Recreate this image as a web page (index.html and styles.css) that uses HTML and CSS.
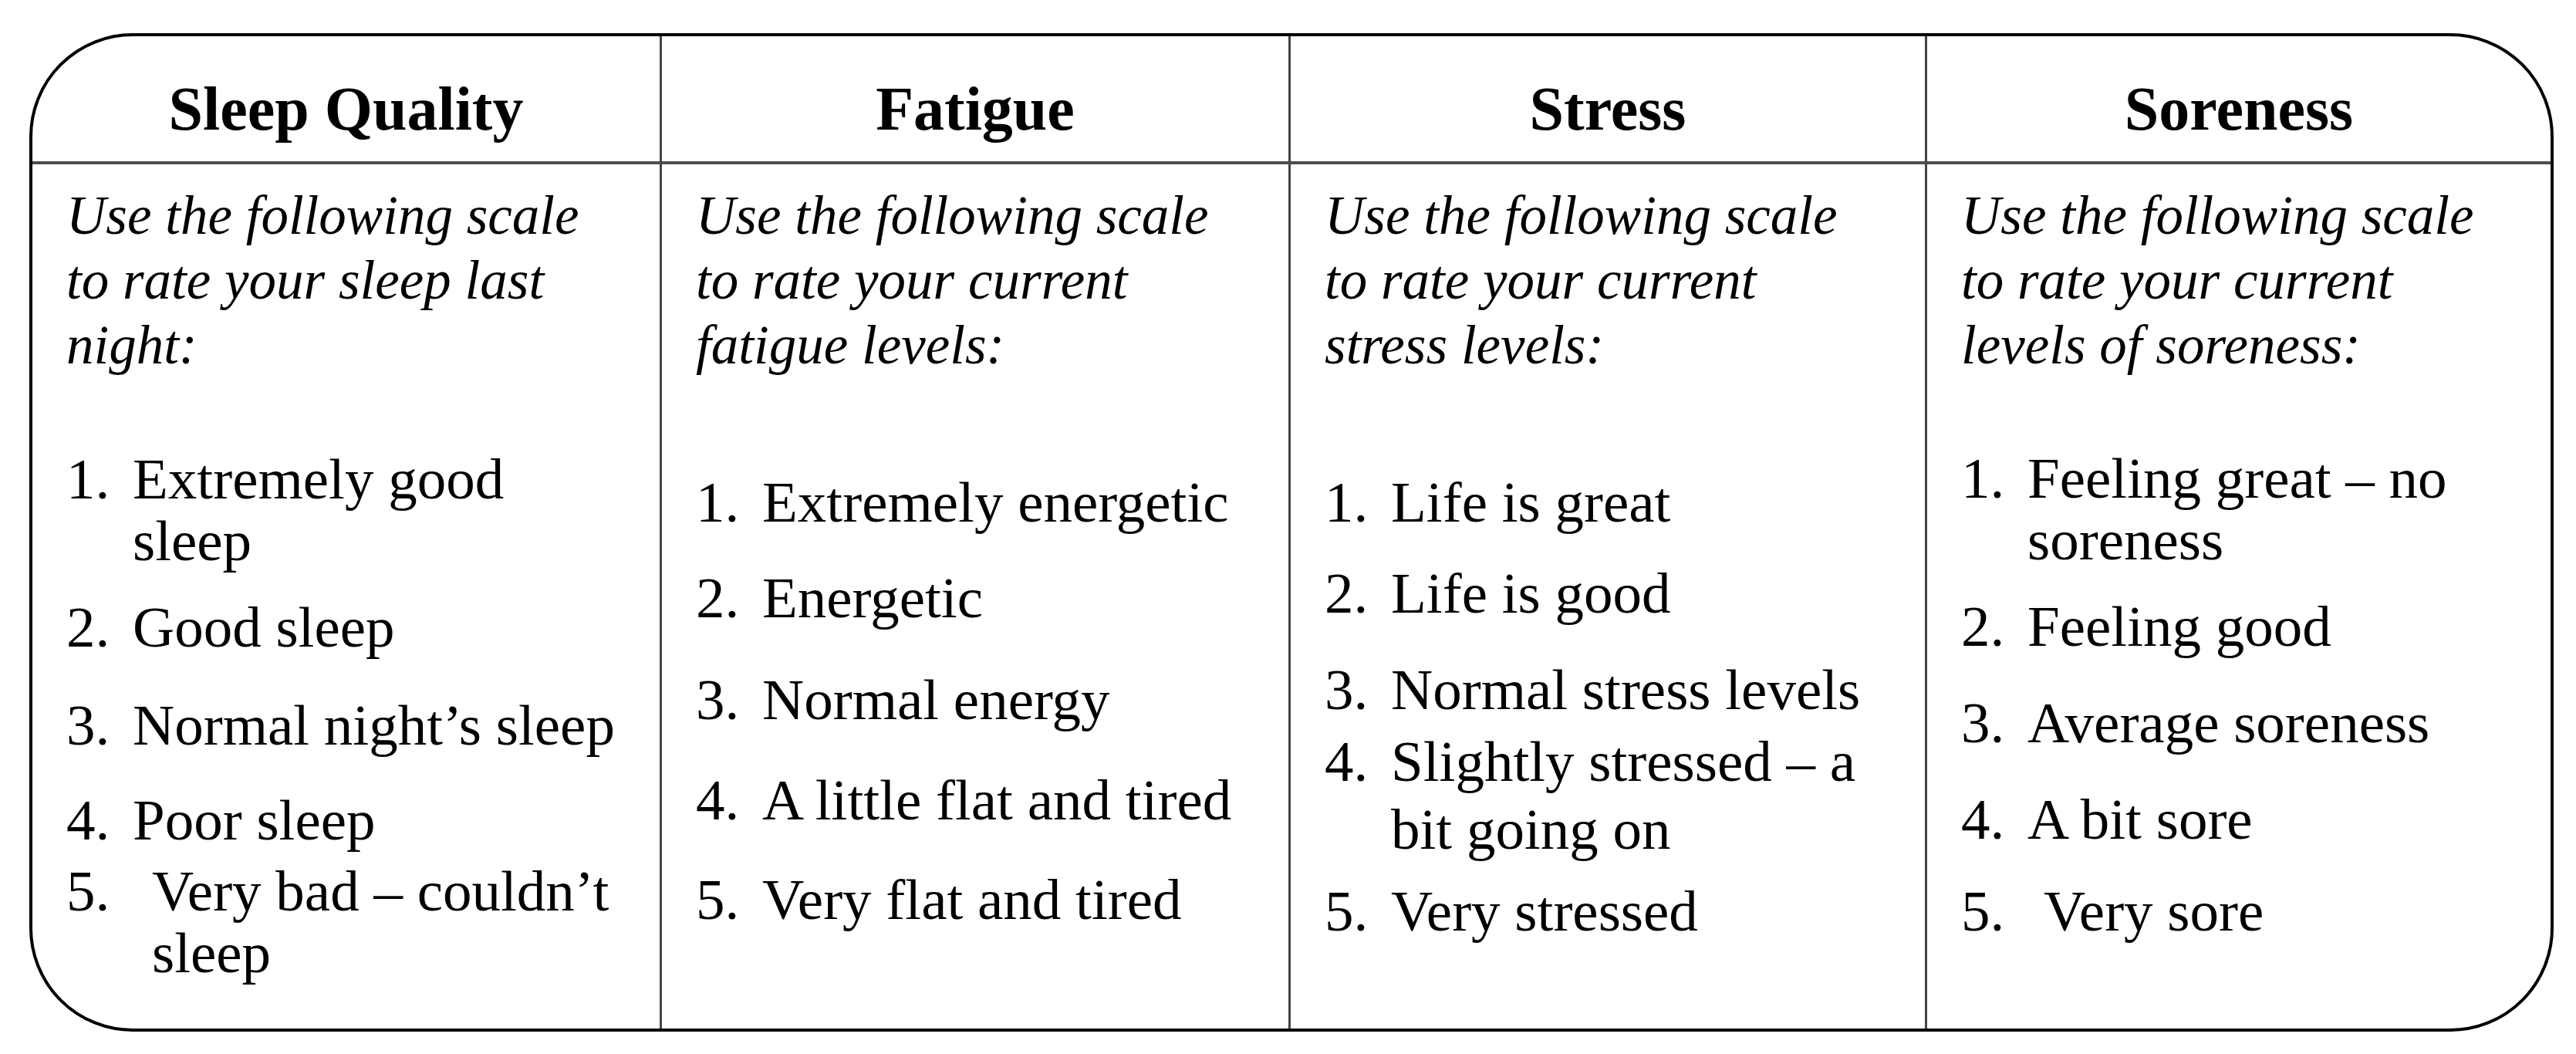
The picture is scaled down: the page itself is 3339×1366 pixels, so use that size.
FILE: index.html
```html
<!DOCTYPE html>
<html lang="en">
<head>
<meta charset="utf-8">
<title>Wellness Questionnaire</title>
<link rel="stylesheet" href="styles.css">
</head>
<body>
<div class="card">
  <div class="head div">Sleep Quality</div>
  <div class="head div">Fatigue</div>
  <div class="head div">Stress</div>
  <div class="head">Soreness</div>

  <div class="cell div">
    <p class="intro">Use the following scale<br>to rate your sleep last<br>night:</p>
    <div class="item g92"><span class="num">1.</span><span class="txt">Extremely good<br>sleep</span></div>
    <div class="item g32"><span class="num">2.</span><span class="txt">Good sleep</span></div>
    <div class="item g47"><span class="num">3.</span><span class="txt">Normal night’s sleep</span></div>
    <div class="item g43"><span class="num">4.</span><span class="txt">Poor sleep</span></div>
    <div class="item g12"><span class="num wide">5.</span><span class="txt">Very bad – couldn’t<br>sleep</span></div>
  </div>

  <div class="cell div">
    <p class="intro">Use the following scale<br>to rate your current<br>fatigue levels:</p>
    <div class="item g122"><span class="num">1.</span><span class="txt">Extremely energetic</span></div>
    <div class="item g44"><span class="num">2.</span><span class="txt">Energetic</span></div>
    <div class="item g52"><span class="num">3.</span><span class="txt">Normal energy</span></div>
    <div class="item g50"><span class="num">4.</span><span class="txt">A little flat and tired</span></div>
    <div class="item g49"><span class="num">5.</span><span class="txt">Very flat and tired</span></div>
  </div>

  <div class="cell div">
    <p class="intro">Use the following scale<br>to rate your current<br>stress levels:</p>
    <div class="item g122"><span class="num">1.</span><span class="txt">Life is great</span></div>
    <div class="item g38"><span class="num">2.</span><span class="txt">Life is good</span></div>
    <div class="item g45"><span class="num">3.</span><span class="txt">Normal stress levels</span></div>
    <div class="item tall g9"><span class="num">4.</span><span class="txt">Slightly stressed – a<br>bit going on</span></div>
    <div class="item g22"><span class="num">5.</span><span class="txt">Very stressed</span></div>
  </div>

  <div class="cell">
    <p class="intro">Use the following scale<br>to rate your current<br>levels of soreness:</p>
    <div class="item g91"><span class="num">1.</span><span class="txt">Feeling great – no<br>soreness</span></div>
    <div class="item g32"><span class="num">2.</span><span class="txt">Feeling good</span></div>
    <div class="item g45"><span class="num">3.</span><span class="txt">Average soreness</span></div>
    <div class="item g45"><span class="num">4.</span><span class="txt">A bit sore</span></div>
    <div class="item g39"><span class="num wide2">5.</span><span class="txt">Very sore</span></div>
  </div>
</div>
</body>
</html>
```

FILE: styles.css
```css
html, body {
  margin: 0;
  padding: 0;
  background: #ffffff;
}

body {
  font-family: "Liberation Serif", "Times New Roman", serif;
  color: #000000;
}

.card {
  margin: 43px 0 0 38px;
  width: 3272px;
  height: 1294px;
  box-sizing: border-box;
  border: 4px solid #000000;
  border-radius: 134px;
  background: #ffffff;
  display: grid;
  grid-template-columns: 816px 815px 825px 1fr;
  grid-template-rows: 166px 1fr;
  overflow: hidden;
}

.head {
  box-sizing: border-box;
  height: 166px;
  padding-top: 54px;
  border-bottom: 4px solid #4d4d4d;
  font-weight: bold;
  font-size: 80px;
  line-height: 80px;
  text-align: center;
  white-space: nowrap;
}

.div {
  border-right: 3px solid #444444;
}

.cell {
  box-sizing: border-box;
  padding: 24px 0 0 44px;
  white-space: nowrap;
}

.intro {
  margin: 0;
  font-style: italic;
  font-size: 71px;
  line-height: 84px;
}

.item {
  display: flex;
  font-size: 75px;
  line-height: 80px;
}

.item.tall {
  line-height: 88px;
}

.num {
  flex: none;
  width: 86px;
}

.num.wide {
  width: 111px;
}

.num.wide2 {
  width: 107px;
}

.txt {
  flex: none;
}

.g9 { margin-top: 9px; }
.g12 { margin-top: 12px; }
.g22 { margin-top: 22px; }
.g32 { margin-top: 32px; }
.g38 { margin-top: 38px; }
.g39 { margin-top: 39px; }
.g43 { margin-top: 43px; }
.g44 { margin-top: 44px; }
.g45 { margin-top: 45px; }
.g47 { margin-top: 47px; }
.g49 { margin-top: 49px; }
.g50 { margin-top: 50px; }
.g52 { margin-top: 52px; }
.g91 { margin-top: 91px; }
.g92 { margin-top: 92px; }
.g122 { margin-top: 122px; }
```
